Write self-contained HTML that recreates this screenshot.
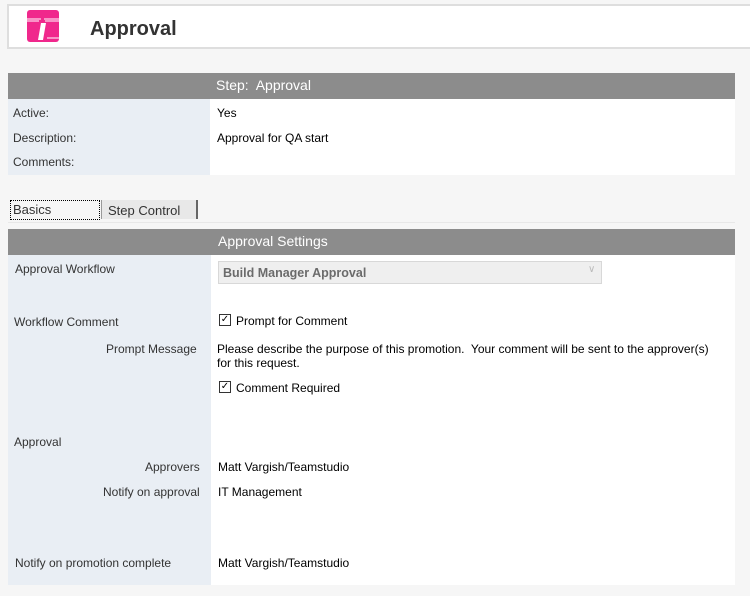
<!DOCTYPE html>
<html><head><style>
body{margin:0;width:750px;height:596px;background:#f6f6f6;font-family:"Liberation Sans",Arial,sans-serif;font-size:12px;color:#000;position:relative;overflow:hidden}
.a{position:absolute}
.hdr{background:#8c8c8c;color:#fff;font-size:14px;line-height:25px;box-sizing:border-box}
.lab{background:#e9eef4}
.t{position:absolute;white-space:nowrap}
.cb{position:absolute;width:10px;height:10px;border:1px solid #333;background:#fff;font-size:10px;line-height:10px;text-align:center}
</style></head><body>
<div class="a" style="left:7px;top:4px;width:741px;height:41px;background:#fff;border:2px solid #dedede;border-right:none"></div>
<svg class="a" style="left:27px;top:10px" width="32" height="32" viewBox="0 0 32 32"><rect width="32" height="32" rx="3" fill="#f0288c"/><path d="M0 9H14M17 9H32M0 11H12M18 11H32" stroke="#fff" stroke-width="1"/><path d="M14 13H19L16 30H11Z" fill="#fff"/><path d="M20 28H32" stroke="#fff"/></svg>
<div class="t" style="left:90px;top:18px;font-size:20px;color:#333;font-weight:bold">Approval</div>

<div class="a hdr" style="left:8px;top:73px;width:727px;height:26px;padding-left:208px">Step:&nbsp; Approval</div>
<div class="a lab" style="left:8px;top:99px;width:202px;height:76px"></div>
<div class="a" style="left:210px;top:99px;width:525px;height:76px;background:#fff"></div>
<div class="t" style="left:13px;top:106px;color:#333">Active:</div><div class="t" style="left:217px;top:106px">Yes</div>
<div class="t" style="left:13px;top:131px;color:#333">Description:</div><div class="t" style="left:217px;top:131px">Approval for QA start</div>
<div class="t" style="left:13px;top:155px;color:#333">Comments:</div>

<div class="a" style="left:10px;top:200px;width:88px;height:18px;border:1px dotted #000"></div>
<div class="t" style="left:13px;top:202px;font-size:13px;color:#333">Basics</div>
<div class="a" style="left:101px;top:200px;width:94px;height:19px;background:#e8e8e8;border-left:1px solid #999;border-right:2px solid #666"></div>
<div class="t" style="left:108px;top:203px;font-size:13px;color:#333">Step Control</div>
<div class="a" style="left:8px;top:222px;width:727px;height:1px;background:#e8e8e8"></div>

<div class="a hdr" style="left:8px;top:229px;width:727px;height:26px;padding-left:210px">Approval Settings</div>
<div class="a lab" style="left:8px;top:255px;width:203px;height:330px"></div>
<div class="a" style="left:211px;top:255px;width:524px;height:330px;background:#fff"></div>
<div class="t" style="left:15px;top:262px;color:#333">Approval Workflow</div>
<div class="a" style="left:218px;top:261px;width:382px;height:21px;background:#efefef;border:1px solid #d8d8d8"></div>
<div class="t" style="left:223px;top:266px;font-weight:bold;color:#6b6b6b;font-size:12.5px">Build Manager Approval</div>
<div class="t" style="left:588px;top:264px;color:#bbb;font-size:10px">&#8744;</div>
<div class="t" style="left:14px;top:315px;color:#333">Workflow Comment</div>
<div class="cb" style="left:219px;top:314px">✓</div><div class="t" style="left:236px;top:314px">Prompt for Comment</div>
<div class="t" style="left:106px;top:342px;color:#333">Prompt Message</div>
<div class="t" style="left:217px;top:342px;line-height:14px">Please describe the purpose of this promotion.&nbsp; Your comment will be sent to the approver(s)<br>for this request.</div>
<div class="cb" style="left:219px;top:381px">✓</div><div class="t" style="left:236px;top:381px">Comment Required</div>
<div class="t" style="left:14px;top:435px;color:#333">Approval</div>
<div class="t" style="left:145px;top:460px;color:#333">Approvers</div><div class="t" style="left:218px;top:460px">Matt Vargish/Teamstudio</div>
<div class="t" style="left:103px;top:485px;color:#333">Notify on approval</div><div class="t" style="left:218px;top:485px">IT Management</div>
<div class="t" style="left:15px;top:556px;color:#333">Notify on promotion complete</div><div class="t" style="left:218px;top:556px">Matt Vargish/Teamstudio</div>
</body></html>
